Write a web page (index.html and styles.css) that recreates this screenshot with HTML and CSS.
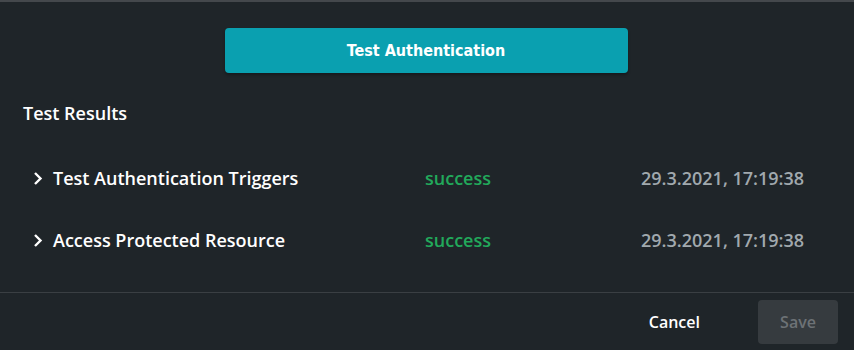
FILE: index.html
```html
<!DOCTYPE html>
<html lang="en">
<head>
    <meta charset="UTF-8">
    <title>Test Authentication</title>
    <link rel="stylesheet" href="styles.css">
</head>
<body>
    <div class="dialog">
        <div class="content">
            <div class="actions-top">
                <button class="btn-test">Test Authentication</button>
            </div>
            <div class="title">Test Results</div>
            <div class="results">
                <div class="row">
                    <div class="name">
                        <svg class="chevron" viewBox="0 0 10 14" width="10" height="15"><path d="M2 1.5 L7.5 7 L2 12.5" fill="none" stroke="#fff" stroke-width="2.4"/></svg>
                        Test Authentication Triggers
                    </div>
                    <div class="status">success</div>
                    <div class="date">29.3.2021, 17:19:38</div>
                </div>
                <div class="row">
                    <div class="name">
                        <svg class="chevron" viewBox="0 0 10 14" width="10" height="15"><path d="M2 1.5 L7.5 7 L2 12.5" fill="none" stroke="#fff" stroke-width="2.4"/></svg>
                        Access Protected Resource
                    </div>
                    <div class="status">success</div>
                    <div class="date">29.3.2021, 17:19:38</div>
                </div>
            </div>
        </div>
        <div class="footer">
            <button class="btn-cancel">Cancel</button>
            <button class="btn-save" disabled>Save</button>
        </div>
    </div>
</body>
</html>
```

FILE: styles.css
```css
body {
    margin: 0;
    background: #1f2529;
    font-family: "Open Sans", Arial, sans-serif;
    color: #ffffff;
}
.dialog {
    height: 350px;
    border-top: 2px solid #44484c;
    box-sizing: border-box;
    display: flex;
    flex-direction: column;
}
.content {
    padding: 0 23px;
    flex: 1;
}
.actions-top {
    display: flex;
    justify-content: center;
    padding: 26px 2px 0 0;
}
.btn-test {
    width: 403px;
    height: 45px;
    background: #0aa0b0;
    color: #ffffff;
    border: none;
    border-radius: 4px;
    font-family: "DejaVu Sans Condensed", "Open Sans", sans-serif;
    font-weight: bold;
    font-size: 16px;
    box-shadow: 0 2px 3px rgba(0, 0, 0, 0.3);
}
.title {
    margin-top: 28px;
    font-size: 18px;
    font-weight: 600;
}
.results {
    margin-top: 22px;
}
.row {
    display: flex;
    align-items: center;
    height: 62px;
    font-size: 18px;
    font-weight: 600;
}
.name {
    width: 392px;
    display: flex;
    align-items: center;
    gap: 10px;
    padding-left: 10px;
}
.status {
    width: 216px;
    color: #22a95b;
}
.date {
    color: #a1a9ae;
}
.footer {
    border-top: 1px solid #3a3f43;
    height: 57px;
    display: flex;
    align-items: center;
    justify-content: flex-end;
    padding: 0 16px 0 0;
    gap: 58px;
}
.btn-cancel {
    background: none;
    border: none;
    color: #ffffff;
    font-family: "Open Sans", Arial, sans-serif;
    font-weight: 600;
    font-size: 16px;
    padding: 0;
}
.btn-save {
    width: 80px;
    height: 44px;
    background: #363b3f;
    color: #6d7276;
    border: none;
    border-radius: 4px;
    font-family: "Open Sans", Arial, sans-serif;
    font-weight: 600;
    font-size: 16px;
}
```
